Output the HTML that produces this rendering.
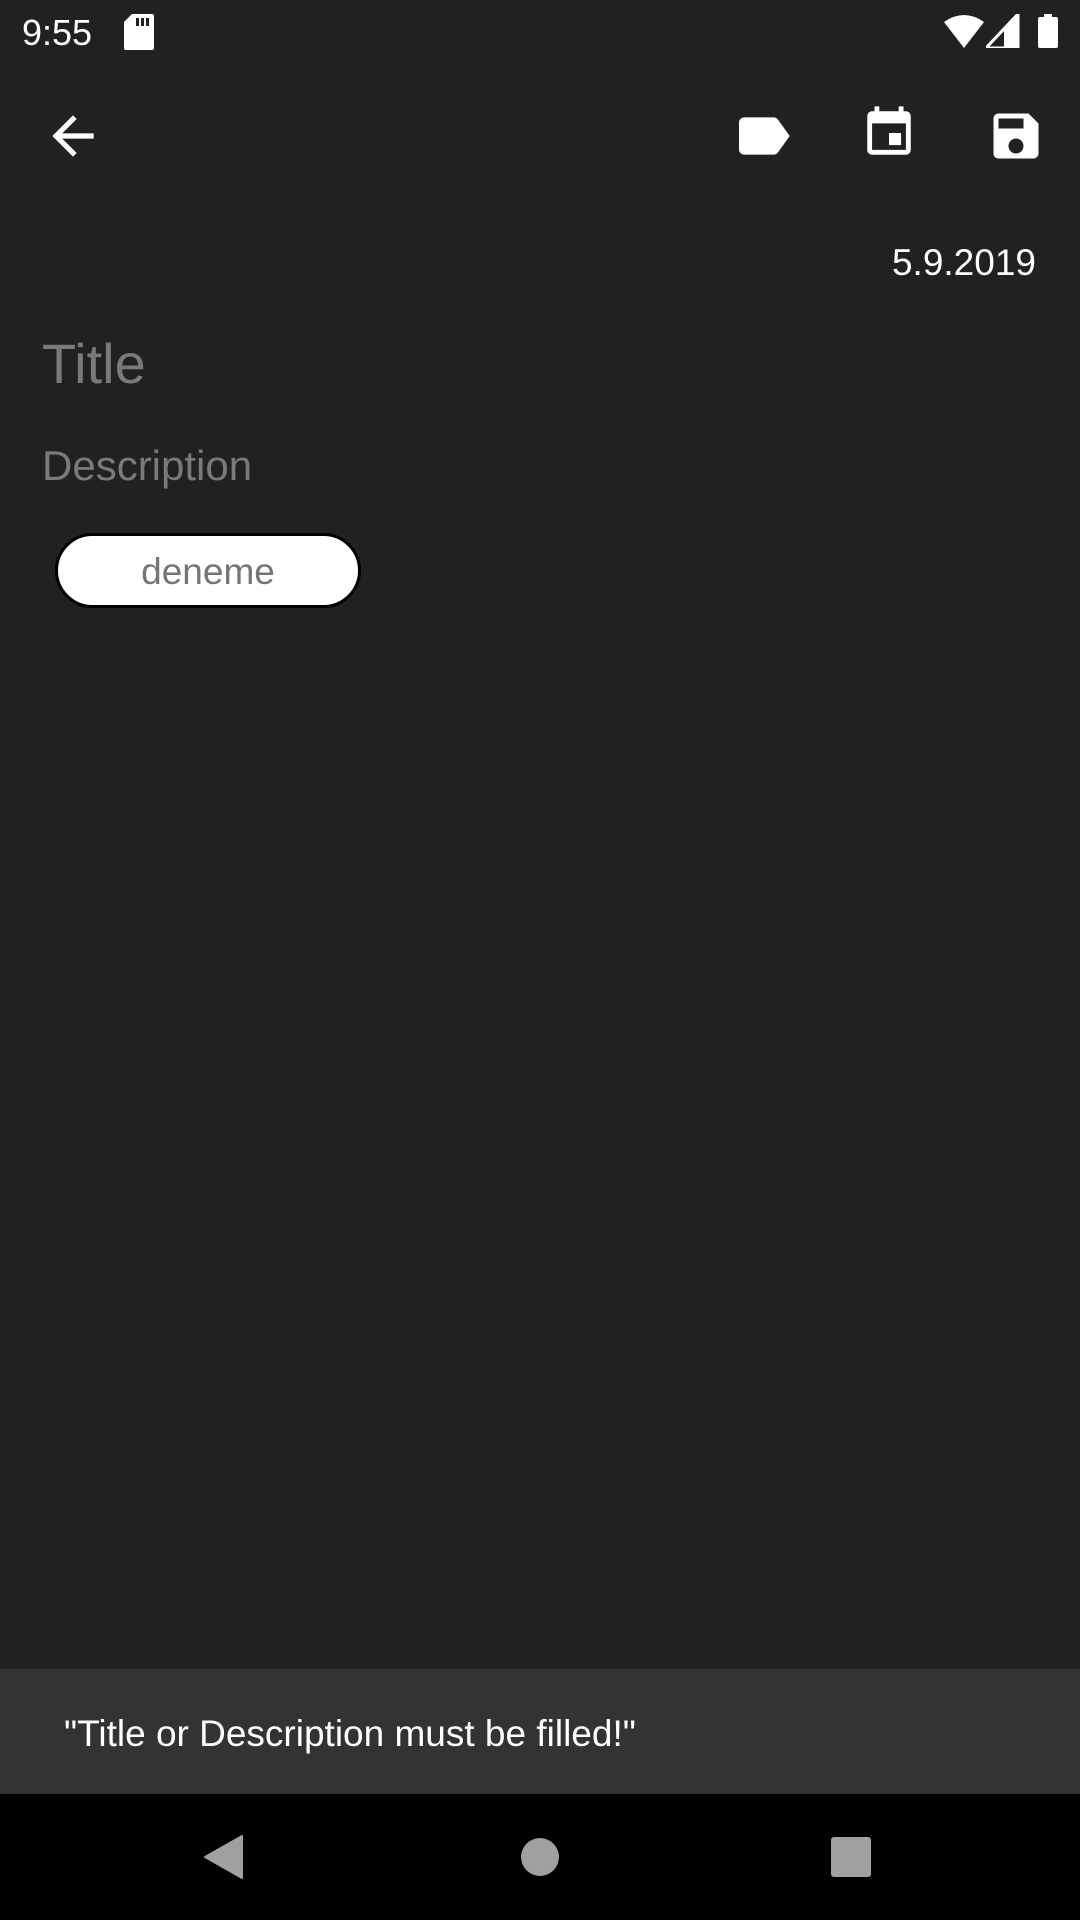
<!DOCTYPE html>
<html><head><meta charset="utf-8"><style>
*{margin:0;padding:0;box-sizing:border-box}
body{width:1080px;height:1920px;background:#212121;position:relative;overflow:hidden;font-family:"Liberation Sans",Roboto,sans-serif}
.abs{position:absolute}
</style></head><body>
<div class="abs" style="left:0;top:209px;width:1080px;height:2px;background:#1e1e1e"></div>
<div class="abs" style="left:22px;top:12px;color:#fff;font-size:36px;line-height:42px">9:55</div>
<svg class="abs" style="left:124px;top:14px" width="30" height="36" viewBox="0 0 30 36"><path d="M8 0H28Q30 0 30 2V34Q30 36 28 36H2Q0 36 0 34V8Z" fill="#fff"/><rect x="12" y="4" width="3" height="8" fill="#212121"/><rect x="17" y="4" width="3" height="8" fill="#212121"/><rect x="22" y="4" width="3" height="8" fill="#212121"/></svg>
<svg class="abs" style="left:944px;top:14px" width="40" height="34" viewBox="0 0 40 34"><path d="M0 8Q20 -6 40 8L20 34Z" fill="#fff"/></svg>
<svg class="abs" style="left:986px;top:14px" width="34" height="34" viewBox="0 0 34 34"><path d="M32 0V34H0Z" fill="none" stroke="#fff" stroke-width="3"/><path d="M32 0V34H18V14Z" fill="#fff"/></svg>
<svg class="abs" style="left:1038px;top:14px" width="20" height="34" viewBox="0 0 20 34"><rect x="6" y="0" width="8" height="4" fill="#fff"/><rect x="0" y="3" width="20" height="31" rx="2" fill="#fff"/></svg>

<svg class="abs" style="left:42px;top:105px" width="62" height="62" viewBox="0 0 24 24"><path d="M20 11H7.83l5.59-5.59L12 4l-8 8 8 8 1.41-1.41L7.83 13H20v-2z" fill="#fff"/></svg>
<svg class="abs" style="left:731px;top:104px" width="64" height="64" viewBox="0 0 24 24"><path d="M17.63 5.84C17.27 5.33 16.67 5 16 5L5 5.01C3.9 5.01 3 5.9 3 7v10c0 1.1.9 1.99 2 1.99L16 19c.67 0 1.27-.33 1.63-.84L22 12l-4.37-6.16z" fill="#fff"/></svg>
<svg class="abs" style="left:860px;top:104px" width="58" height="58" viewBox="0 0 24 24"><path d="M17 12h-5v5h5v-5zM16 1v2H8V1H6v2H5c-1.11 0-1.99.9-1.99 2L3 19c0 1.1.89 2 2 2h14c1.1 0 2-.9 2-2V5c0-1.1-.9-2-2-2h-1V1h-2zm3 18H5V8h14v11z" fill="#fff"/></svg>
<svg class="abs" style="left:986px;top:106px" width="60" height="60" viewBox="0 0 24 24"><path d="M17 3H5c-1.11 0-2 .9-2 2v14c0 1.1.89 2 2 2h14c1.1 0 2-.9 2-2V7l-4-4zm-5 16c-1.66 0-3-1.34-3-3s1.34-3 3-3 3 1.34 3 3-1.34 3-3 3zm3-10H5V5h10v4z" fill="#fff"/></svg>

<div class="abs" style="right:44px;top:239px;color:#fff;font-size:37px;line-height:48px">5.9.2019</div>
<div class="abs" style="left:42px;top:330px;color:#7a7a7a;font-size:56px;line-height:68px">Title</div>
<div class="abs" style="left:42px;top:438px;color:#7a7a7a;font-size:42px;line-height:56px">Description</div>
<div class="abs" style="left:55px;top:533px;width:306px;height:75px;background:#fff;border:3px solid #000;border-radius:38px;color:#757575;font-size:37px;line-height:71px;text-align:center">deneme</div>

<div class="abs" style="left:0;top:1669px;width:1080px;height:125px;background:#333"></div>
<div class="abs" style="left:64px;top:1710px;color:#fff;font-size:37px;line-height:48px">"Title or Description must be filled!"</div>
<div class="abs" style="left:0;top:1794px;width:1080px;height:126px;background:#000"></div>
<svg class="abs" style="left:204px;top:1835px" width="40" height="44" viewBox="0 0 40 44"><path d="M38 1V43L1 22Z" fill="#a0a0a0" stroke="#a0a0a0" stroke-linejoin="round" stroke-width="2"/></svg>
<div class="abs" style="left:521px;top:1838px;width:38px;height:38px;border-radius:50%;background:#a0a0a0"></div>
<div class="abs" style="left:831px;top:1837px;width:40px;height:40px;border-radius:3px;background:#a0a0a0"></div>
</body></html>
